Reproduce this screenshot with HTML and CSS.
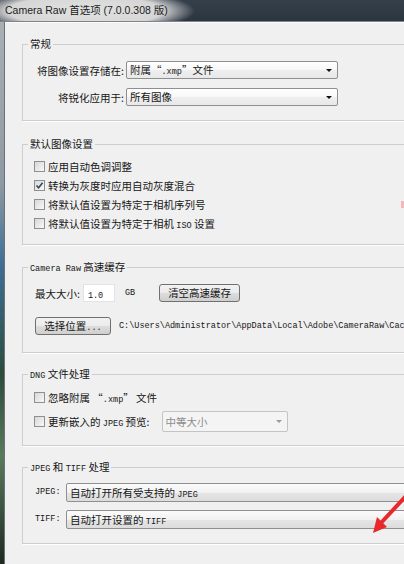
FILE: index.html
```html
<!DOCTYPE html>
<html>
<head>
  <title>Camera Raw 首选项</title>
  <link rel="stylesheet" href="styles.css">
</head>
<body>
  <div class="titlebar">
    <span class="title">Camera Raw 首选项 (7.0.0.308 版)</span>
  </div>

  <div class="window">
    <div class="frame-left"></div>
    <div class="client">

      <fieldset class="group g1">
        <legend>常规</legend>
        <div class="form-row">
          <label class="lbl">将图像设置存储在:</label>
          <div class="combo store">附属“<span class="en">.xmp</span>”文件<i class="caret"></i></div>
        </div>
        <div class="form-row row-gap">
          <label class="lbl">将锐化应用于:</label>
          <div class="combo store">所有图像<i class="caret"></i></div>
        </div>
      </fieldset>

      <fieldset class="group g2">
        <legend>默认图像设置</legend>
        <div class="check-row"><span class="cb"></span><span>应用自动色调调整</span></div>
        <div class="check-row"><span class="cb checked"><svg viewBox="0 0 9 9" width="9" height="9"><path d="M1.5 4.5 L3.6 6.8 L7.6 1.8" fill="none" stroke="#35485c" stroke-width="1.6"/></svg></span><span>转换为灰度时应用自动灰度混合</span></div>
        <div class="check-row"><span class="cb"></span><span>将默认值设置为特定于相机序列号</span></div>
        <div class="check-row"><span class="cb"></span><span>将默认值设置为特定于相机 <span class="en">ISO</span> 设置</span></div>
      </fieldset>

      <fieldset class="group g3">
        <legend><span class="en">Camera Raw</span> 高速缓存</legend>
        <div class="form-row">
          <span>最大大小:</span>
          <div class="textbox"><span class="en">1.0</span></div>
          <span class="en unit">GB</span>
          <div class="btn purge">清空高速缓存</div>
        </div>
        <div class="form-row cache-loc">
          <div class="btn choose">选择位置<span class="en">...</span></div>
          <span class="en path">C:\Users\Administrator\AppData\Local\Adobe\CameraRaw\Cac</span>
        </div>
      </fieldset>

      <fieldset class="group g4">
        <legend><span class="en">DNG</span> 文件处理</legend>
        <div class="check-row"><span class="cb"></span><span>忽略附属 “<span class="en">.xmp</span>” 文件</span></div>
        <div class="check-row preview-row">
          <span class="cb"></span><span>更新嵌入的 <span class="en">JPEG</span> 预览:</span>
          <div class="combo disabled preview">中等大小<i class="caret"></i></div>
        </div>
      </fieldset>

      <fieldset class="group g5">
        <legend><span class="en">JPEG</span> 和 <span class="en">TIFF</span> 处理</legend>
        <div class="form-row">
          <span class="en short-lbl">JPEG:</span>
          <div class="combo wide">自动打开所有受支持的 <span class="en">JPEG</span><i class="caret"></i></div>
        </div>
        <div class="form-row row-gap">
          <span class="en short-lbl">TIFF:</span>
          <div class="combo wide">自动打开设置的 <span class="en">TIFF</span><i class="caret"></i></div>
        </div>
      </fieldset>

    </div>
  </div>

  <!-- red annotation arrow drawn over the screenshot -->
  <svg class="arrow" width="44" height="60" viewBox="0 0 44 60">
    <line x1="46" y1="16" x2="20" y2="44" stroke="#e8282b" stroke-width="4" stroke-linecap="round"/>
    <polygon points="13,53 27,47 17,37" fill="#e8282b"/>
  </svg>
  <div class="arrow-tip"></div>
</body>
</html>
```

FILE: styles.css
```css
body {
  margin: 0;
  width: 404px;
  height: 564px;
  overflow: hidden;
  background: #f0f0f0;
  font-family: "Noto Sans CJK SC", sans-serif;
  font-size: 10.5px;
  color: #161616;
}

.en {
  font-family: "Liberation Mono", monospace;
  font-size: 8.5px;
}

/* window chrome */
.titlebar {
  height: 21px;
  background:
    radial-gradient(ellipse 110px 22px at 85px 11px, #e2e2e2 0%, #d6d6d6 70%, rgba(214,214,214,0) 100%),
    linear-gradient(#35404b, #2b3540);
  border-bottom: 1px solid #7d858c;
}

.title {
  display: block;
  padding: 4px 0 0 5px;
  font-family: "Liberation Sans", "Noto Sans CJK SC", sans-serif;
  font-size: 10.5px;
  line-height: 13px;
  color: #1c1c1c;
}

.window {
  display: flex;
}

.frame-left {
  width: 4px;
  flex: none;
  height: 542px;
  background: linear-gradient(#a9b0b5 0%, #8d99a3 30%, #3d6e96 45%, #2c4b3c 65%, #5a7a5c 80%, #1d2a22 100%);
  border-right: 1px solid #6b7176;
}

.client {
  width: 600px;
  flex: none;
  border-top: 1px solid #fbfbfb;
}

/* group boxes */
.group {
  width: 560px;
  margin: 14px 0 0 17px;
  padding: 0 0 0 12px;
  border: 1px solid #cdcdcd;
  box-shadow: 1px 1px 0 #fff;
  min-width: 0;
}

.group legend {
  margin-left: -7px;
  padding: 0 2px;
  line-height: 14px;
  height: 14px;
}

.g1 { padding-top: 10px; padding-bottom: 14px; }
.g2 { margin-top: 16px; padding-top: 6px; padding-bottom: 11px; }
.g3 { margin-top: 15px; padding-top: 10px; padding-bottom: 17px; }
.g4 { margin-top: 14px; padding-top: 7px; padding-bottom: 13px; }
.g5 { margin-top: 14px; padding-top: 9px; padding-bottom: 15px; }

.form-row {
  display: flex;
  align-items: center;
  height: 18px;
}

.row-gap {
  margin-top: 9px;
}

.lbl {
  width: 89px;
  text-align: right;
  margin-right: 2px;
}

/* combo boxes */
.combo {
  position: relative;
  box-sizing: border-box;
  height: 18px;
  line-height: 16px;
  padding-left: 3px;
  border: 1px solid #8e8f8f;
  border-radius: 2px;
  background: linear-gradient(#fbfbfb 0%, #f1f1f1 50%, #e6e6e6 51%, #dcdcdc 100%);
  white-space: nowrap;
}

.combo.store {
  width: 212px;
  background: linear-gradient(#ffffff 0%, #f7f7f7 50%, #efefef 51%, #e8e8e8 100%);
}

.combo.wide {
  width: 520px;
  height: 19px;
  line-height: 17px;
  margin-left: 6px;
}

.combo.preview {
  width: 126px;
  height: 21px;
  line-height: 19px;
  margin-left: 12px;
  background: #f4f4f4;
  border-color: #c4c4c4;
  color: #8d8d8d;
}

.caret {
  position: absolute;
  right: 5px;
  top: 7px;
  width: 0;
  height: 0;
  border-left: 3px solid transparent;
  border-right: 3px solid transparent;
  border-top: 3px solid #111;
}

.combo.disabled .caret {
  border-top-color: #9a9a9a;
  top: 8px;
}

/* check boxes */
.check-row {
  display: flex;
  align-items: center;
  height: 19px;
  white-space: nowrap;
}

.cb {
  box-sizing: border-box;
  flex: none;
  width: 11px;
  height: 11px;
  margin: 0 3px 0 -1px;
  border: 1px solid #8f8f8f;
  background: linear-gradient(135deg, #d8d8d8, #f8f8f8);
  display: flex;
  align-items: center;
  justify-content: center;
}

.cb svg {
  display: block;
}

.preview-row {
  height: 21px;
  margin-top: 4px;
}

/* cache controls */
.textbox {
  box-sizing: border-box;
  width: 32px;
  height: 18px;
  margin-left: 3px;
  padding-left: 4px;
  line-height: 17px;
  background: #fff;
  border: 1px solid #e2e3ea;
}

.unit {
  margin-left: 10px;
}

.btn {
  box-sizing: border-box;
  height: 18px;
  line-height: 16px;
  text-align: center;
  border: 1px solid #707070;
  border-radius: 3px;
  background: linear-gradient(#f2f2f2 0%, #ebebeb 50%, #dddddd 51%, #cfcfcf 100%);
  white-space: nowrap;
}

.purge {
  width: 81px;
  margin-left: 24px;
}

.cache-loc {
  margin-top: 15px;
}

.choose {
  width: 76px;
}

.path {
  margin-left: 8px;
  white-space: nowrap;
}

.short-lbl {
  width: 25px;
}

/* annotation overlays */
.arrow {
  position: absolute;
  left: 360px;
  top: 480px;
}

.arrow-tip {
  position: absolute;
  left: 401px;
  top: 201px;
  width: 3px;
  height: 7px;
  background: #f2b8bd;
}
```
